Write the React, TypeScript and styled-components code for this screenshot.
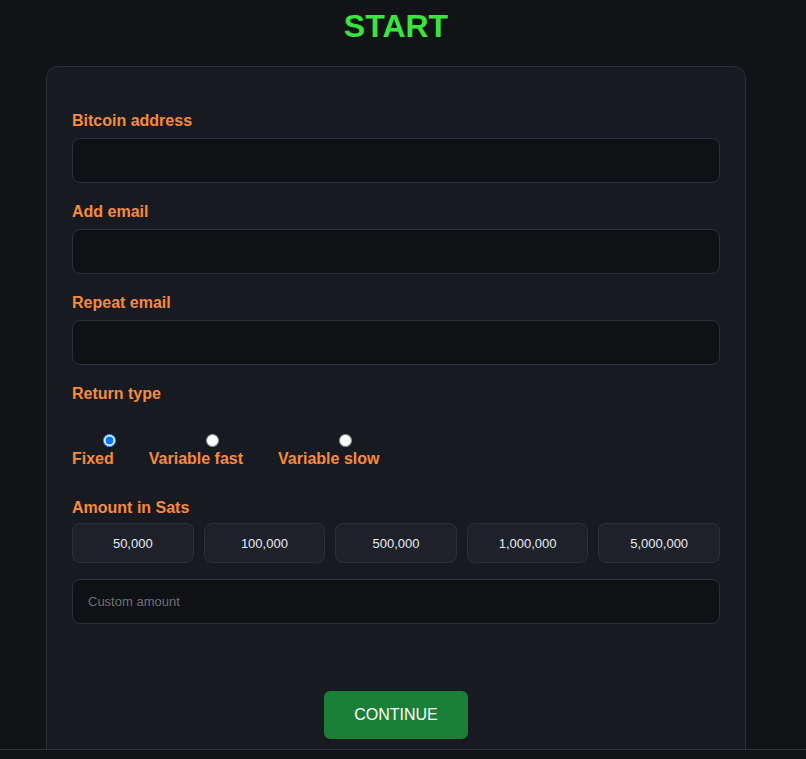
import React, { useState } from "react";
import styled, { createGlobalStyle } from "styled-components";

const GlobalStyle = createGlobalStyle`
  html, body {
    margin: 0;
    padding: 0;
    background: #111317;
    font-family: "Liberation Sans", Arial, sans-serif;
  }
  * {
    box-sizing: border-box;
  }
`;

const amounts = ["50,000", "100,000", "500,000", "1,000,000", "5,000,000"];
const returnTypes = ["Fixed", "Variable fast", "Variable slow"];

const App: React.FC = () => {
  const [returnType, setReturnType] = useState("Fixed");

  return (
    <>
      <GlobalStyle />
      <Page>
        <Title>START</Title>
        <Card>
          <Field>
            <Label>Bitcoin address</Label>
            <TextInput type="text" />
          </Field>
          <Field>
            <Label>Add email</Label>
            <TextInput type="email" />
          </Field>
          <Field>
            <Label>Repeat email</Label>
            <TextInput type="email" />
          </Field>
          <Field>
            <Label>Return type</Label>
            <RadioGroup>
              {returnTypes.map((t) => (
                <RadioOption key={t}>
                  <Radio
                    type="radio"
                    name="returnType"
                    checked={returnType === t}
                    onChange={() => setReturnType(t)}
                  />
                  <RadioText>{t}</RadioText>
                </RadioOption>
              ))}
            </RadioGroup>
          </Field>
          <Field>
            <AmountLabel>Amount in Sats</AmountLabel>
            <AmountRow>
              {amounts.map((a) => (
                <AmountButton key={a} type="button">
                  {a}
                </AmountButton>
              ))}
            </AmountRow>
            <TextInput type="text" placeholder="Custom amount" />
          </Field>
          <Actions>
            <ContinueButton type="button">CONTINUE</ContinueButton>
          </Actions>
        </Card>
      </Page>
      <Footer />
    </>
  );
};

export default App;

const Page = styled.div`
  display: flex;
  flex-direction: column;
  align-items: center;
  width: 792px;
  padding-top: 8px;
`;

const Title = styled.h1`
  margin: 0 0 21px;
  font-size: 32px;
  font-weight: 700;
  color: #3ae43c;
  line-height: 37px;
`;

const Card = styled.div`
  width: 700px;
  min-height: 700px;
  padding: 45px 25px 40px;
  background: #171a21;
  border: 1px solid #2c3038;
  border-radius: 12px;
`;

const Field = styled.div`
  display: flex;
  flex-direction: column;
  margin-bottom: 20px;
`;

const Label = styled.label`
  font-size: 16px;
  line-height: 18px;
  font-weight: 700;
  color: #f78b3a;
  margin-bottom: 8px;
`;

const AmountLabel = styled(Label)`
  margin-bottom: 6px;
`;

const TextInput = styled.input`
  height: 45px;
  width: 100%;
  padding: 0 15px;
  background: #0f1115;
  border: 1px solid #2c3038;
  border-radius: 8px;
  color: #e6edf3;
  font-family: "Liberation Sans", Arial, sans-serif;
  font-size: 13px;
  outline: none;

  &::placeholder {
    color: #6d7077;
  }
`;

const RadioGroup = styled.div`
  display: flex;
  gap: 35px;
  margin-top: 23px;
  margin-bottom: 11px;
`;

const RadioOption = styled.label`
  display: flex;
  flex-direction: column;
  align-items: center;
  cursor: pointer;
`;

const Radio = styled.input`
  width: 13px;
  height: 13px;
  margin: 0 -17px 3px 17px;
`;

const RadioText = styled.span`
  font-size: 16px;
  line-height: 18px;
  font-weight: 700;
  color: #f78b3a;
`;

const AmountRow = styled.div`
  display: grid;
  grid-template-columns: repeat(5, 1fr);
  gap: 10px;
  margin-bottom: 16px;
`;

const AmountButton = styled.button`
  height: 40px;
  background: #1e2129;
  border: 1px solid #2c3038;
  border-radius: 8px;
  color: #e6edf3;
  font-family: "Liberation Sans", Arial, sans-serif;
  font-size: 13px;
  cursor: pointer;
`;

const Actions = styled.div`
  display: flex;
  justify-content: center;
  margin-top: 67px;
`;

const ContinueButton = styled.button`
  width: 144px;
  height: 48px;
  background: #1a7f37;
  border: none;
  border-radius: 6px;
  color: #ffffff;
  font-family: "Liberation Sans", Arial, sans-serif;
  font-size: 16px;
  cursor: pointer;
`;

const Footer = styled.div`
  position: fixed;
  left: 0;
  right: 0;
  bottom: 0;
  height: 10px;
  background: #111317;
  border-top: 1px solid #30343b;
`;
